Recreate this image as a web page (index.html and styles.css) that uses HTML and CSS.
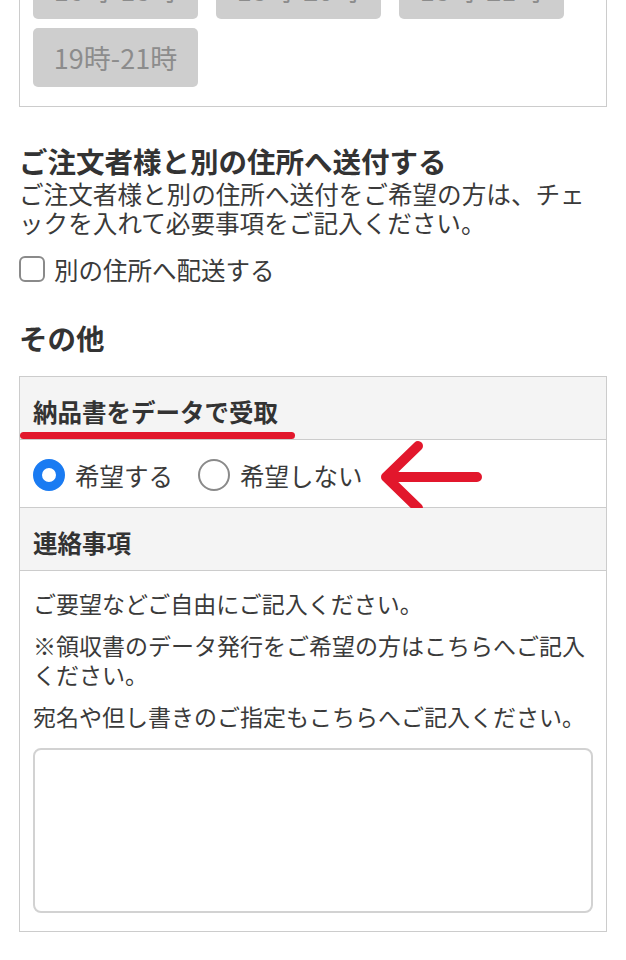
FILE: index.html
```html
<!DOCTYPE html>
<html lang="ja">
<head>
    <meta charset="UTF-8">
    <meta name="viewport" content="width=device-width, initial-scale=1.0">
    <title>ご注文手続き</title>
    <link rel="stylesheet" href="styles.css">
</head>
<body>
    <div class="page">
        <div class="time-box">
            <div class="time-grid">
                <button type="button" class="time-btn">16時-18時</button>
                <button type="button" class="time-btn">18時-20時</button>
                <button type="button" class="time-btn">18時-21時</button>
                <button type="button" class="time-btn">19時-21時</button>
            </div>
        </div>

        <h2 class="section-title">ご注文者様と別の住所へ送付する</h2>
        <p class="note">ご注文者様と別の住所へ送付をご希望の方は、チェックを入れて必要事項をご記入ください。</p>
        <label class="check-row">
            <input type="checkbox" class="check">
            <span>別の住所へ配送する</span>
        </label>

        <h2 class="section-title other-title">その他</h2>
        <div class="form-table">
            <div class="table-head invoice-head">
                納品書をデータで受取
                <span class="mark-line"></span>
            </div>
            <div class="table-body radio-row">
                <label class="radio-item">
                    <input type="radio" name="invoice" class="radio" checked>
                    <span>希望する</span>
                </label>
                <label class="radio-item">
                    <input type="radio" name="invoice" class="radio">
                    <span>希望しない</span>
                </label>
                <svg class="mark-arrow" width="110" height="78" viewBox="0 0 110 78">
                    <path d="M6 39 H97 M38 8 L6 39 L38 70" fill="none" stroke="#e2172c" stroke-width="10" stroke-linecap="round" stroke-linejoin="round"/>
                </svg>
            </div>
            <div class="table-head">連絡事項</div>
            <div class="table-body memo">
                <p>ご要望などご自由にご記入ください。</p>
                <p>※領収書のデータ発行をご希望の方はこちらへご記入ください。</p>
                <p>宛名や但し書きのご指定もこちらへご記入ください。</p>
                <textarea class="memo-input"></textarea>
            </div>
        </div>
    </div>
</body>
</html>
```

FILE: styles.css
```css
body {
    margin: 0;
    background: #fff;
    color: #333;
    font-family: "Noto Sans CJK JP", "Noto Sans", sans-serif;
    overflow: hidden;
}

.page {
    padding: 0 19px;
}

/* 配達時間帯 */
.time-box {
    margin-top: -54px;
    border: 1px solid #ccc;
    padding: 13px 13px 19px;
}

.time-grid {
    display: grid;
    grid-template-columns: repeat(3, 165px);
    column-gap: 18px;
    row-gap: 9px;
}

.time-btn {
    height: 59px;
    border: none;
    border-radius: 5px;
    background-color: #cecece;
    color: #8c8c8c;
    font-family: inherit;
    font-size: 27px;
    padding: 0;
}

.section-title {
    margin: 36px 0 0;
    font-size: 28.5px;
    line-height: 36px;
    font-weight: bold;
    color: #333;
}

.note {
    margin: 0;
    font-size: 24.6px;
    line-height: 29px;
    color: #3a3a3a;
}

.check-row {
    display: flex;
    align-items: center;
    gap: 9px;
    margin-top: 17px;
    height: 30px;
    font-size: 24.5px;
    color: #3a3a3a;
}

.check {
    appearance: none;
    margin: 0;
    width: 26px;
    height: 26px;
    border: 2px solid #8a8a8a;
    border-radius: 6px;
    background: #fff;
}

/* その他 テーブル */
.form-table {
    margin-top: 20px;
    border: 1px solid #ccc;
}

.table-head {
    position: relative;
    background-color: #f4f4f4;
    border-bottom: 1px solid #ccc;
    padding: 19px 13px 11px;
    font-size: 24.5px;
    line-height: 32px;
    font-weight: bold;
    color: #333;
}

.table-body {
    border-bottom: 1px solid #ccc;
    padding: 0 13px;
}

.table-body:last-child {
    border-bottom: none;
}

.mark-line {
    position: absolute;
    left: 0;
    top: 55px;
    width: 275px;
    height: 7px;
    border-radius: 4px;
    background-color: #e2172c;
}

.radio-row {
    position: relative;
    display: flex;
    align-items: center;
    gap: 25px;
    padding-top: 19px;
    padding-bottom: 16px;
}

.radio-item {
    display: flex;
    align-items: center;
    gap: 10px;
    height: 32px;
    font-size: 24.5px;
    color: #3a3a3a;
}

.radio {
    appearance: none;
    margin: 0;
    width: 32px;
    height: 32px;
    border: 2px solid #8a8a8a;
    border-radius: 50%;
    background: #fff;
}

.radio:checked {
    border: 9px solid #1a7bf2;
}

.mark-arrow {
    position: absolute;
    left: 360px;
    top: -2px;
}

.memo {
    padding-top: 18px;
    padding-bottom: 18px;
}

.memo p {
    margin: 0 0 13px;
    font-size: 23px;
    line-height: 29px;
    color: #3a3a3a;
}

.memo-input {
    display: block;
    box-sizing: border-box;
    width: 100%;
    height: 165px;
    margin-top: 17px;
    border: 2px solid #d2d2d2;
    border-radius: 8px;
    resize: none;
}
```
